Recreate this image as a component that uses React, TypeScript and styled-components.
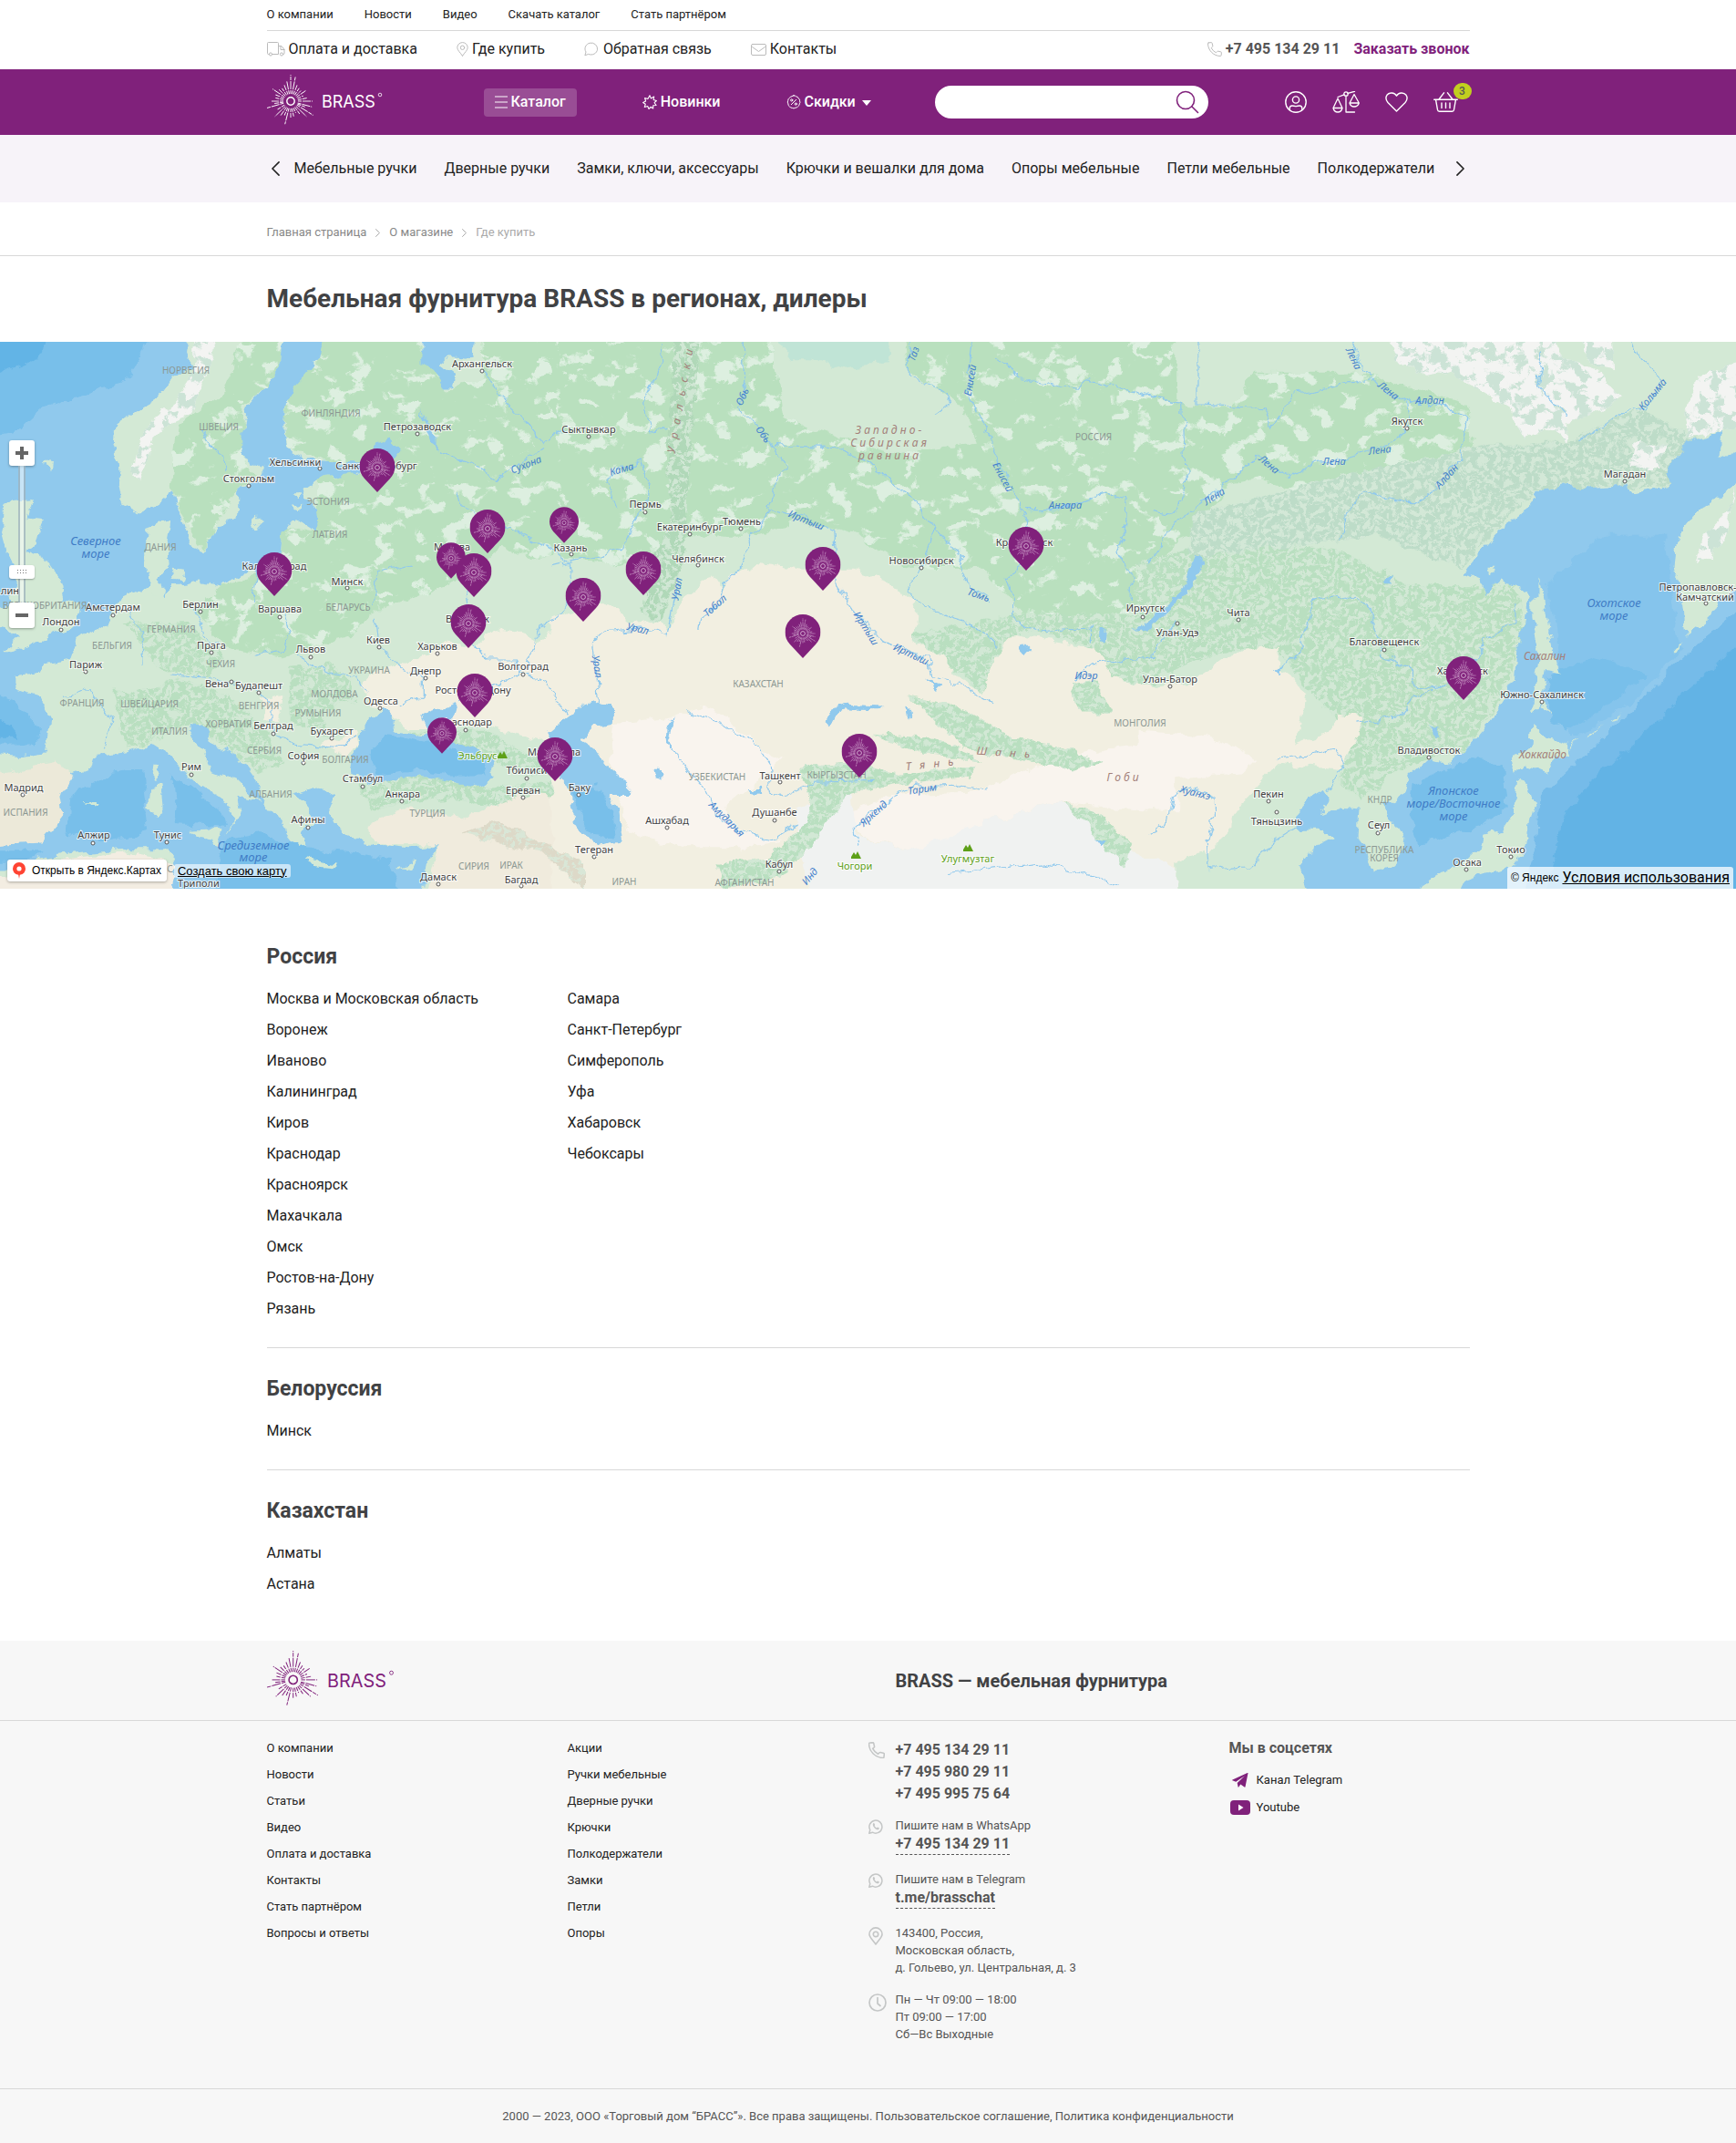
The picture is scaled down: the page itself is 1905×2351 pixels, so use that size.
import React from "react";
import styled, { createGlobalStyle } from "styled-components";

const purple = "#80217b";
const line = "#d8d8d8";

const GlobalStyle = createGlobalStyle`
  *, *::before, *::after { box-sizing: border-box; }
  body { margin: 0; background: #fff; color: #222; font-family: Roboto, "Open Sans", sans-serif; font-size: 16px; line-height: 20px; }
  a { color: inherit; text-decoration: none; }
  button { font: inherit; color: inherit; border: 0; background: none; padding: 0; cursor: pointer; }
  h1, h2, h3, p, ul { margin: 0; padding: 0; }
  ul { list-style: none; }
  svg { display: block; flex: none; }
`;

const Container = styled.div`
  width: 100%;
  max-width: 1320px;
  margin: 0 auto;
`;

/* ---------- header ---------- */

const TopNav = styled.nav`
  display: flex;
  gap: 34px;
  height: 34px;
  padding-top: 6px;
  border-bottom: 1px solid ${line};
  font-size: 13px;
`;

const ServiceRow = styled.div`
  display: flex;
  align-items: center;
  gap: 43px;
  height: 42px;
  padding-bottom: 2px;
`;

const IconLink = styled.a`
  display: flex;
  align-items: center;
  gap: 4px;
  svg { color: #bbb; }
`;

const Callback = styled.div`
  display: flex;
  gap: 15px;
  margin-left: auto;
  font-weight: 700;
  color: #555;
`;

const CallbackButton = styled.button`
  font-weight: 700;
  color: ${purple};
`;

const MainBar = styled.div`
  background: ${purple};
  color: #fff;
`;

const MainBarInner = styled(Container)`
  display: flex;
  align-items: center;
  height: 72px;
`;

const LogoLink = styled.a<{ $wide?: boolean }>`
  flex: 0 0 ${(p) => (p.$wide ? "690px" : "238px")};
`;

const MainNav = styled.nav`
  display: flex;
  align-items: center;
  gap: 72px;
  margin-right: 70px;
  font-weight: 500;
`;

const CatalogButton = styled.button`
  display: flex;
  align-items: center;
  gap: 4px;
  height: 31px;
  padding: 0 12px;
  border-radius: 4px;
  background: #994d95;
  font-weight: 500;
`;

const MainLink = styled.a`
  display: flex;
  align-items: center;
  gap: 4px;
`;

const Caret = styled.svg`
  margin: 2px 0 0 3px;
`;

const Search = styled.form`
  display: flex;
  align-items: center;
  width: 300px;
  height: 36px;
  padding: 0 10px 0 16px;
  border-radius: 18px;
  background: #fff;
  color: ${purple};
`;

const SearchInput = styled.input`
  flex: 1;
  min-width: 0;
  border: 0;
  outline: 0;
  background: none;
  font: inherit;
`;

const UserTools = styled.div`
  display: flex;
  align-items: center;
  gap: 28px;
  margin-left: auto;
`;

const Tool = styled.a`
  position: relative;
  display: block;
`;

const BasketTool = styled(Tool)`
  width: 40px;
`;

const Badge = styled.span`
  position: absolute;
  top: -10px;
  right: -2px;
  width: 20px;
  height: 18px;
  border-radius: 9px;
  background: #c1cf1f;
  color: #555;
  font-size: 12px;
  font-weight: 500;
  line-height: 18px;
  text-align: center;
`;

const CategoryStrip = styled.div`
  background: #f7f3f9;
`;

const CategoryInner = styled(Container)`
  display: flex;
  align-items: center;
  justify-content: space-between;
  height: 74px;
`;

const CategoryNav = styled.nav`
  display: flex;
  flex: 1;
  gap: 30px;
  padding-left: 10px;
  overflow: hidden;
  white-space: nowrap;
`;

const ArrowButton = styled.button`
  display: flex;
  flex: none;
  justify-content: center;
  width: 20px;
`;

/* ---------- page heading ---------- */

const CrumbBar = styled.div`
  border-bottom: 1px solid ${line};
`;

const Crumbs = styled(Container)`
  display: flex;
  align-items: center;
  gap: 10px;
  height: 58px;
  padding-top: 8px;
  font-size: 13px;
  color: #888;
  svg { color: #aaa; }
`;

const CurrentCrumb = styled.span`
  color: #aaa;
`;

const PageTitle = styled.h1`
  height: 94px;
  font-size: 28px;
  line-height: 94px;
  color: #414244;
`;

/* ---------- map ---------- */

const MapFrame = styled.section`
  position: relative;
  height: 600px;
  overflow: hidden;
  background: #d3ead6;
`;

const MapPicture = styled.svg`
  width: 100%;
  height: 600px;
`;

const PinButton = styled.button<{ $x: number; $y: number; $small: boolean }>`
  position: absolute;
  left: calc(50% + ${(p) => p.$x - 952}px);
  top: ${(p) => p.$y}px;
  transform: translate(-50%, -100%);
  z-index: ${(p) => (p.$small ? 1 : 2)};
`;

const ZoomControl = styled.div`
  position: absolute;
  z-index: 3;
  left: 10px;
  top: 108px;
  display: flex;
  flex-direction: column;
  align-items: center;
  width: 28px;
  height: 206px;
`;

const ZoomButton = styled.button`
  display: flex;
  align-items: center;
  justify-content: center;
  width: 28px;
  height: 28px;
  border-radius: 3px;
  background: #fff;
  color: #666;
  box-shadow: 0 1px 3px rgba(0, 0, 0, 0.35);
`;

const ZoomTrack = styled.div`
  flex: 1;
  width: 8px;
  padding-top: 109px;
  border: solid rgba(110, 140, 155, 0.5);
  border-width: 0 2px;
  background: rgba(255, 255, 255, 0.5);
`;

const ZoomHandle = styled.div`
  display: flex;
  align-items: center;
  justify-content: center;
  width: 28px;
  height: 15px;
  margin-left: -12px;
  border-radius: 3px;
  background: #fff;
  box-shadow: 0 1px 2px rgba(0, 0, 0, 0.3);
`;

const MapActions = styled.div`
  position: absolute;
  z-index: 3;
  left: 8px;
  bottom: 8px;
  display: flex;
  align-items: center;
  gap: 8px;
  font-family: "Liberation Sans", Arial, sans-serif;
  font-size: 12px;
  color: #000;
`;

const OpenMap = styled.a`
  display: flex;
  align-items: center;
  gap: 7px;
  height: 24px;
  padding: 0 6px;
  border-radius: 3px;
  background: #fff;
  box-shadow: 0 1px 3px rgba(0, 0, 0, 0.3);
`;

const CreateMap = styled.a`
  padding: 0 4px;
  border-radius: 3px;
  background: rgba(255, 255, 255, 0.6);
  font-size: 13px;
  line-height: 15px;
  text-decoration: underline;
`;

const MapCopyright = styled.div`
  position: absolute;
  z-index: 3;
  right: 3px;
  bottom: 0;
  display: flex;
  align-items: center;
  gap: 4px;
  height: 24px;
  padding: 0 4px;
  border-radius: 3px 3px 0 0;
  background: rgba(255, 255, 255, 0.75);
  color: #000;
  font-family: "Liberation Sans", Arial, sans-serif;
  font-size: 12px;
`;

const TermsLink = styled.a`
  font-family: Roboto, sans-serif;
  font-size: 16px;
  text-decoration: underline;
`;

/* ---------- dealers ---------- */

const Dealers = styled(Container)`
  padding: 30px 0 20px;
`;

const Country = styled.section`
  padding: 31px 0 25px;
  border-bottom: 1px solid ${line};
  &:last-child { border-bottom: 0; }
`;

const CountryName = styled.h2`
  margin-bottom: 15px;
  font-size: 23px;
  line-height: 28px;
  color: #414244;
`;

const CityList = styled.ul<{ $rows: number }>`
  display: grid;
  grid-auto-flow: column;
  grid-template-rows: repeat(${(p) => p.$rows}, 34px);
  grid-template-columns: repeat(4, 1fr);
  line-height: 34px;
`;

/* ---------- footer ---------- */

const FooterRoot = styled.footer`
  background: #f7f7f7;
`;

const FooterBand = styled.div`
  border-bottom: 1px solid ${line};
`;

const FooterHead = styled(Container)`
  display: flex;
  align-items: center;
  height: 87px;
`;

const FooterTitle = styled.h3`
  font-size: 20px;
  line-height: 24px;
  color: #414244;
`;

const FooterGrid = styled(Container)`
  display: grid;
  grid-template-columns: 25fr 25fr 30fr 20fr;
  align-items: start;
  padding: 15px 0 47px;
`;

const FooterLinks = styled.ul`
  font-size: 13px;
  line-height: 29px;
`;

const Contacts = styled.div`
  display: flex;
  flex-direction: column;
  gap: 13px;
  padding-top: 5px;
  font-size: 13px;
  line-height: 19px;
  color: #555;
`;

const ContactRow = styled.div`
  display: grid;
  grid-template-columns: 30px 1fr;
  align-items: start;
  svg { margin-top: 3px; color: #c4c6c6; }
  p { padding-bottom: 3px; }
`;

const Phones = styled.div`
  display: grid;
  font-size: 16px;
  font-weight: 700;
  line-height: 24px;
`;

const ChatLink = styled.a`
  display: table;
  border-bottom: 1px dashed #555;
  font-size: 16px;
  font-weight: 700;
  line-height: 22px;
`;

const ChatBlock = styled.div`
  padding-bottom: 4px;
`;

const Social = styled.div`
  display: flex;
  flex-direction: column;
  gap: 10px;
  padding-top: 5px;
  font-size: 13px;
`;

const SocialTitle = styled.h3`
  margin-bottom: 5px;
  font-size: 16px;
  line-height: 20px;
  color: #555;
`;

const SocialLink = styled.a`
  display: grid;
  grid-template-columns: 24px 1fr;
  align-items: center;
  justify-items: start;
  gap: 6px;
  height: 20px;
  svg { justify-self: center; color: ${purple}; }
`;

const Copyright = styled.p`
  padding: 20px 0 19px;
  font-size: 13px;
  text-align: center;
  color: #555;
`;

/* ---------- drawings ---------- */

const rays: [number, number][] = [
  [0, 29], [11, 27], [22, 19], [33, 17], [44, 16], [55, 20], [67, 15], [79, 18], [90, 24], [105, 24],
  [112, 17], [122, 29], [134, 24], [145, 17], [157, 14], [169, 17], [180, 18], [194, 26], [204, 17],
  [215, 19], [226, 24], [238, 17], [254, 27], [262, 18], [270, 21], [282, 17], [293, 18], [304, 24],
  [315, 18], [326, 17], [338, 19], [349, 23],
];

const Burst = ({ cx, cy, k, width }: { cx: number; cy: number; k: number; width: number }) => (
  <g transform={`translate(${cx} ${cy}) scale(${k})`} stroke="currentColor" strokeWidth={width} fill="none">
    {rays.map(([a, r]) => (
      <line key={a} x1="0" y1="-8" x2="0" y2={-r} transform={`rotate(${a})`} strokeDasharray="4 1 9 1" />
    ))}
    <circle r="4.2" strokeWidth={width * 1.6} />
  </g>
);

const Logo = ({ large }: { large?: boolean }) => (
  <svg width={large ? 141 : 128} height={large ? 66 : 60} viewBox="0 0 128 60" color={large ? purple : "#fff"}>
    <Burst cx={26} cy={29} k={1} width={0.9} />
    <text x="60" y="36" fill="currentColor" fontFamily="Inter, sans-serif" fontSize="18" fontWeight="400">BRASS</text>
    <circle cx="124" cy="22" r="1.8" fill="none" stroke="currentColor" strokeWidth="0.8" />
  </svg>
);

const stroke = { fill: "none", stroke: "currentColor", strokeLinecap: "round", strokeLinejoin: "round" } as const;

const TruckIcon = () => (
  <svg width="20" height="16" viewBox="0 0 20 16" {...stroke} strokeWidth="1">
    <path d="M2.5 13.5H1.5a1 1 0 0 1-1-1V1.5a1 1 0 0 1 1-1h10a1 1 0 0 1 1 1v12h-7M12.5 4.5h3.5l3 4v4a1 1 0 0 1-1 1M15 4.5v4h4" />
    <circle cx="4" cy="13.5" r="1.6" /><circle cx="16" cy="13.5" r="1.6" />
  </svg>
);
const PlaceIcon = ({ size = 16, weight = 1 }: { size?: number; weight?: number }) => (
  <svg width={Math.round((size * 13) / 16)} height={size} viewBox="0 0 13 16" {...stroke} strokeWidth={weight}>
    <path d="M6.5 15.3C4 11.500.8 9 .8 6.300a5.700 5.700 0 0 1 11.400 0C12.200 9 9 11.500 6.500 15.300Z" /><circle cx="6.500" cy="6.300" r="2.200" />
  </svg>
);
const CommentIcon = () => (
  <svg width="17" height="16" viewBox="0 0 17 16" {...stroke} strokeWidth="1">
    <path d="M1 14.500 2 11A6.800 6.500 0 1 1 5 13.500Z" />
  </svg>
);
const MailIcon = () => (
  <svg width="17" height="13" viewBox="0 0 17 13" {...stroke} strokeWidth="1">
    <rect x=".5" y=".5" width="16" height="12" rx="1.500" /><path d="m1.500 3.500 7 5 7-5" />
  </svg>
);
const PhoneIcon = ({ size = 16, weight = 1 }: { size?: number; weight?: number }) => (
  <svg width={size} height={size} viewBox="0 0 16 16" {...stroke} strokeWidth={weight}>
    <path d="M1.200.900 4.200.600c.5 0 .8.300.900.700l.7 3c.1.400 0 .7-.3 1L4.200 6.600a12 12 0 0 0 5.200 5.200l1.300-1.300c.3-.3.600-.4 1-.3l3 .7c.4.100.7.400.7.900l-.3 3c0 .4-.4.700-.8.700C6.500 15.500.500 9 .500 1.700c0-.4.300-.8.700-.8Z" />
  </svg>
);
const MenuIcon = () => (
  <svg width="14" height="16" viewBox="0 0 14 16" stroke="#fff" strokeOpacity=".65" strokeWidth="1.500"><path d="M0 2h14M0 8h14M0 14h14" /></svg>
);
const SparkIcon = () => (
  <svg width="16" height="16" viewBox="0 0 16 16" {...stroke} strokeWidth="1.100">
    <path d="m8 .7 1.300 3.200L12.700 2l-.6 3.500 3.300 1-2.300 2.200 2 2.800-3.400.2v3.300l-2.600-1.700L7 15.500l-1.300-3-3.400 1 1-3.300L.6 8.500l3-1.500-1-3.500 3.300 1Z" />
  </svg>
);
const PercentIcon = () => (
  <svg width="16" height="16" viewBox="0 0 16 16" {...stroke} strokeWidth="1">
    <path d="M8 .8q2 .1 2.600 1 2.200.2 2.700 2.200 1.700 1 1.300 2.800.9 1.700-.3 3 .1 2-1.600 2.900-1 1.700-2.800 1.500Q8 15.500 6.300 14.400q-2 .1-3-1.700-1.700-1-1.400-2.800Q.7 8 1.700 6.500q-.1-2 1.600-3Q4.300 1.700 6 1.800 6.800.8 8 .8ZM5.300 10.700l5.400-5.400" />
    <circle cx="5.700" cy="5.900" r="1.100" /><circle cx="10.300" cy="10.100" r="1.100" />
  </svg>
);
const CaretIcon = () => (
  <Caret width="10" height="6" viewBox="0 0 10 6"><path d="M0 0h10L5 6Z" fill="currentColor" /></Caret>
);
const SearchIcon = () => (
  <svg width="26" height="26" viewBox="0 0 26 26" {...stroke} strokeWidth="1.600"><circle cx="11" cy="11" r="9.500" /><path d="m18 18 6.500 6.500" /></svg>
);
const UserIcon = () => (
  <svg width="24" height="24" viewBox="0 0 24 24" {...stroke} strokeWidth="1.400">
    <circle cx="12" cy="12" r="11.200" /><circle cx="12" cy="9.500" r="3.600" />
    <path d="M5.200 20.500v-1.700q0-2.800 2.800-2.800 1.500 0 4 .7 2.500-.7 4-.7 2.800 0 2.800 2.800v1.700" />
  </svg>
);
const ScalesIcon = () => (
  <svg width="30" height="24" viewBox="0 0 30 24" {...stroke} strokeWidth="1.300">
    <circle cx="15" cy="3" r="2.200" /><path d="M15 5.200V23h9.500M13 3.800 6 6.500M17 2.300l7.500-2M6 8 1 18.500h10ZM24 3.500l-5 9.500h10.300ZM1 18.500q1 4.500 5 4.500t5-4.500M19 13q1 4 5 4t5.300-4" />
  </svg>
);
const HeartIcon = () => (
  <svg width="25" height="22" viewBox="0 0 25 22" {...stroke} strokeWidth="1.400">
    <path d="M12.500 21 3 11.500Q-.6 7 2 3.300 4 .8 7.300 1q3.500.2 5.200 3.200Q14.200 1.200 17.700 1 21 .8 23 3.300q2.600 3.700-1 8.200Z" />
  </svg>
);
const BasketIcon = () => (
  <svg width="27" height="22" viewBox="0 0 27 22" {...stroke} strokeWidth="1.400">
    <path d="M.7 8.200h25.600M2.500 8.200l2 11.300q.3 1.700 2 1.700h14q1.700 0 2-1.700l2-11.300M6 8 11.500.8M21 8 15.500.8M9 12v5.500M13.500 12v5.500M18 12v5.500" />
  </svg>
);
const Chevron = ({ w, h, left, weight = 1 }: { w: number; h: number; left?: boolean; weight?: number }) => (
  <svg width={w} height={h} viewBox="0 0 10 18" {...stroke} strokeWidth={weight}><path d={left ? "M9 1 1 9l8 8" : "m1 1 8 8-8 8"} /></svg>
);
const WhatsAppIcon = () => (
  <svg width="16" height="16" viewBox="0 0 16 16" {...stroke} strokeWidth="1.500">
    <path d="m.8 15.200 1-3.700a7 7 0 1 1 2.700 2.700Z" />
    <path d="M5.200 4.300q-1 1.200 0 3.200 1.500 2.800 4 3.700 1.800.5 2.400-.8.400-1-.4-1.300l-1.300-.6-.9.900q-1.700-.8-2.400-2.300l.6-.8-.6-1.800q-.7-1-1.400-.2Z" fill="currentColor" stroke="none" />
  </svg>
);
const ClockIcon = () => (
  <svg width="20" height="20" viewBox="0 0 20 20" {...stroke} strokeWidth="1.700"><circle cx="10" cy="10" r="9" /><path d="M10 4.500V11l3 2.500" /></svg>
);
const TelegramIcon = () => (
  <svg width="18" height="16" viewBox="0 0 18 16" fill="currentColor">
    <path d="M17.500.3 14.500 15.300Q14.300 16 13.600 15.600L9.300 12.600 7.300 15.500 6.700 15.700 5.700 11 13.800 3.200 4.200 9.700.5 8.300Q-.3 8 .5 7.500L16.800.1Q17.700-.2 17.500.3Z" />
  </svg>
);
const YoutubeIcon = () => (
  <svg width="22" height="16" viewBox="0 0 22 16"><rect width="22" height="16" rx="4" fill="currentColor" /><path d="m9 4.500 5.500 3.500L9 11.500Z" fill="#fff" /></svg>
);

const PinShape = ({ small }: { small: boolean }) => (
  <svg width={small ? 32 : 39} height={small ? 40 : 48} viewBox="0 0 39 48" color="#e2c4e0">
    <path d="M19.500 48 5.500 33Q0 27 0 19.500a19.500 19.500 0 0 1 39 0Q39 27 33.500 33Z" fill={purple} />
    <Burst cx={19.5} cy={21} k={0.58} width={0.9} />
  </svg>
);

/* ---------- map data: three side-by-side sheets, each on its own grid ---------- */

type Sheet = 0 | 1 | 2;
const sheetX = [0, 630, 1265];
const kx = 1 / 2.45;
const ky = 1 / 2.57;
const px = (s: Sheet, x: number) => Math.round(sheetX[s] + x * kx);
const py = (y: number) => Math.round((y - 13) * ky);

const water = "#90c9ed";
const deep = "#78bfea";
const light = "#d3e9d5";
const forest = "#b9e0be";
const steppe = "#f2efe1";
const desert = "#f9f4ee";
const snow = "#f3f4f2";
const hill = "#b9dfc0";

type Area = [Sheet, string, string, boolean?];

const vegetation: Area[] = [
  [0, forest, "M870-60H1130L1200 150 1300 110 1290-60H1600V590L1420 630 1350 590 1200 700 1100 740 1000 780 950 840 850 870 760 900 700 890 600 870 550 800 520 770 600 700 700 660 750 620 760 530 850 550 850 400 980 380 770 310 760 200Z", true],
  [0, forest, "M480 250 600 150 680-60H770L760 80 720 130 655 200 650 330 690 390 640 430 580 540 545 600 500 530 460 420 470 330Z", true],
  [0, hill, "M300 1000 420 990 480 960 620 1010 700 1090 760 1200 700 1230 600 1150 510 1090 400 1140 340 1160Z", true],
  [0, hill, "M340 800 500 800 600 900 560 960 420 930ZM780 930 900 920 960 1020 860 1060 880 1130 780 1080Z", true],
  [0, hill, "M960 1260 1130 1235 1350 1270 1500 1250 1568 1330 1400 1330 1200 1300 1000 1330ZM1100 1110 1300 1110 1480 1200 1440 1240 1330 1200Z", true],
  [1, forest, "M-40-60H520L560 230 740 290 850 330 1080 300 1050 200 900 100 880-60H1620V520L1568 720 1450 800 1200 780 1100 650 900 650 760 560 600 520 480 560 330 560 200 620 100 640-40 620Z", true],
  [1, "#c0e4d6", "M520-40H840L850 70 720 90 640 60 580 60Z"],
  [1, "#b0d8b8", "M270-40H340L300 560 290 640 230 800 180 780 200 640 260 540 250 300Z", true],
  [1, hill, "M900 840 1200 780 1568 780V980L1440 960 1400 880 1200 820 1180 1050 1100 1000Z", true],
  [2, forest, "M280 100 560 100 850 190 860 300 880 520 800 510 700 440 560 420 540 500 300 400 200 420 100 560-40 600V170L90 190 200 200Z", true],
  [2, hill, "M-40 640 200 560 500 600 700 700 980 700 1000 800 960 970 840 1165 700 1200 560 1300 500 1250 540 1120 420 1000 340 880 200 880-40 980Z", true],
  [2, "#bddcc8", "M100 500 560 380 900 300 1100 300 1300 200 1500 300 1400 420 1030 430 830 650 600 560 100 620Z", true],
];

const dry: Area[] = [
  [0, steppe, "M1000 950 1100 920 1200 860 1280 870 1330 820 1420 840 1450 860 1500 800 1600 790V1060L1480 1110 1500 1150 1320 1100 1100 1100 1000 1040 970 980Z"],
  [0, "#f0ebdd", "M990 1370 1100 1330 1250 1350 1400 1290 1620 1300V1620H1130L1180 1430 1020 1430Z"],
  [0, "#ece9d9", "M-40 1240 150 1200 200 1230 160 1290 170 1350 110 1425-40 1440Z"],
  [0, "#f3ede2", "M150 1475 340 1450 470 1480 460 1620H-40V1540Z"],
  [0, steppe, "M700 1020 755 1010 750 1080 710 1085ZM860 1150 960 1110 970 1160 930 1180Z"],
  [1, steppe, "M-60 790 60 750 120 770 160 810 230 800 250 830 290 740 350 690 380 680 400 710 420 670 490 640 620 655 750 655 820 680 880 720 925 740 910 860 1000 900 1030 960 1100 1000 1130 900 1180 840 1400 880 1450 960 1620 1000V1620H-60Z"],
  [2, steppe, "M-60 1000 100 970 200 900 290 870 345 880 340 930 380 960 410 1010 400 1090 380 1150 480 1110 500 1060 560 1070 550 1120 500 1220 340 1200 250 1300 200 1400 150 1450 60 1480-60 1490Z"],
  [1, desert, "M110 1090 250 1075 350 1040 420 1080 500 1160 560 1190 480 1260 400 1330 460 1400 560 1420 450 1440 300 1440 150 1400 130 1330 100 1200Z"],
  [1, desert, "M730 1340 850 1290 1100 1280 1300 1180 1620 1130V1340L1300 1310 1100 1370 1050 1400 900 1450 770 1400Z"],
  [2, desert, "M-40 1110 120 1120 220 1150 280 1190 240 1230 100 1240-40 1260Z"],
  [1, "#f0f2f1", "M600 1330 740 1250 760 1400 900 1450 1100 1370 1300 1310 1400 1340 1480 1440 1620 1500V1620H640L600 1400Z"],
];

const ridges: Area[] = [
  [1, hill, "M900 1010 1030 1040 1180 1130 1300 1150 1420 1200 1350 1220 1200 1190 1050 1160ZM800 1120 960 1130 1100 1190 960 1180Z", true],
  [1, hill, "M600 1210 740 1200 880 1230 1080 1210 1060 1240 860 1260 740 1290 660 1400 560 1520 400 1555 380 1490 520 1470 620 1370 640 1300Z", true],
  [1, hill, "M1310 1310 1400 1340 1500 1430 1480 1500 1400 1400ZM1330 980 1400 960 1450 1060 1360 1060Z", true],
  [0, "#ddd9c8", "M1240 1400 1340 1360 1568 1480V1555L1460 1450 1300 1420Z", true],
  [0, snow, "M520-60H590L570 60 540 150 510 220 450 240 410 290 400 340 375 410 360 380 370 300 400 240 470 180 520 100Z", true],
  [2, snow, "M610-60H1060L1100 60 1200 100 1260 170 1180 220 1120 240 1110 300 1060 250 1000 290 960 200 880 150 800 100 740 110 650 60Z", true],
  [2, snow, "M1130-60H1230L1240 90 1180 80ZM1620 70 1480 100 1430 200 1440 280 1530 265 1620 240ZM1300 300 1380 310 1360 370 1290 370Z", true],
];

const seas: Area[] = [
  [0, water, "M-80-60H520L500 40 520 90 470 110 430 170 380 200 310 245 305 300 315 350 320 420 330 470 375 495 430 465 465 435 490 520 510 590 545 605 580 540 640 500 640 430 700 410 705 370 650 330 650 270 670 190 720 130 760 80 770-60H880L860 60 800 130 770 180 760 250 770 310 830 345 900 350 985 350 960 385 850 400 810 430 830 460 850 480 855 550 810 520 770 530 755 570 750 620 700 660 640 665 600 700 540 690 470 700 440 730 410 700 360 725 310 750 290 800 250 830 210 850 190 910 120 920 110 945 40 955 40 990 100 1010 135 1080 125 1170 60 1180-80 1170Z"],
  [0, water, "M20 1430 110 1425 170 1350 160 1290 200 1230 250 1210 255 1180 340 1170 410 1140 440 1160 470 1200 540 1270 600 1310 635 1360 610 1400 650 1350 635 1290 700 1310 640 1250 570 1220 540 1160 510 1110 515 1090 550 1100 560 1140 640 1180 690 1250 710 1310 760 1370 800 1430 830 1440 800 1370 860 1370 810 1310 790 1290 850 1270 900 1290 880 1340 920 1400 990 1430 1060 1435 1110 1440 1180 1430 1150 1480 1130 1620H500L460 1540 470 1500 460 1440 350 1440 250 1450 130 1465 20 1500-80 1500V1440Z"],
  [0, water, "M1140-60H1280L1270 60 1210 55 1185 75 1225 105 1220 140 1190 140 1160 90 1130 60ZM1000 300 1050 285 1080 320 1060 350 1010 340ZM1130 205 1150 240 1175 280 1175 320 1160 300Z"],
  [0, water, "M970 1110 1030 1050 1060 1080 1060 1110 1150 1120 1260 1150 1320 1190 1330 1240 1290 1270 1200 1250 1130 1235 1050 1250 1000 1260 950 1240 940 1200 970 1160Z"],
  [0, water, "M1150 1060 1230 1030 1220 1070 1150 1100 1135 1070Z"],
  [1, water, "M-70 1110 0 1050 60 1025 105 1035 105 1090 50 1100 20 1130 50 1150 90 1210 140 1250 140 1290 95 1290 120 1330 130 1420 70 1430 20 1400 0 1370-10 1290-40 1230-70 1150Z"],
  [1, water, "M670 1085 690 1050 730 1035 830 1040 820 1052 730 1050 700 1070 685 1100ZM262 1072 252 1120 268 1160 245 1135 246 1100ZM940 965 985 985 975 997ZM1195 875 1210 862 1225 878 1210 895ZM890 1048 908 1052 910 1075 895 1072ZM1420 825 1430 825 1428 865 1418 865ZM212 1220 228 1220 235 1245 215 1240ZM460 1270 505 1270 505 1285 470 1280ZM1405 1412 1430 1420 1420 1435Z"],
  [2, water, "M125 612 133 640 110 700 40 775 0 820-50 830-20 805 40 755 80 715 105 650ZM620 680 650 672 640 695 625 695ZM748 1098 768 1098 765 1125 752 1125ZM330 945 350 925 345 945Z"],
  [2, water, "M1620 300 1530 345 1535 265 1500 275 1440 290 1405 340 1375 380 1395 420 1290 440 1280 410 1200 420 1140 425 1100 415 1030 435 990 500 930 550 870 620 835 665 880 680 890 725 930 690 990 705 1010 740 1000 800 985 840 975 960 900 1090 840 1165 790 1200 740 1190 690 1240 680 1290 625 1320 640 1360 675 1410 670 1460 640 1490 590 1510 570 1440 555 1400 560 1330 500 1325 450 1345 475 1300 460 1275 420 1300 380 1350 385 1390 440 1390 485 1410 430 1440 395 1490 430 1620H1620Z"],
];

const depths: Area[] = [
  [0, deep, "M-80-60H430L380 60 330 130 230 160 120 200 60 260-80 290ZM-80 980 40 1030 110 1100 100 1150-80 1150Z"],
  [0, "#62b4e6", "M-80-60H170L100 60-80 140ZM-80 1040 30 1090 50 1130-80 1130Z"],
  [0, deep, "M190 1290 300 1230 380 1220 400 1400 300 1420 180 1400ZM460 1230 600 1340 610 1380 480 1370ZM600 1420 700 1400 760 1420 900 1450 1050 1470 1090 1620H560ZM-80 1450H120L60 1480H-80Z"],
  [0, deep, "M985 1180 1040 1120 1130 1140 1240 1165 1300 1200 1310 1235 1200 1235 1120 1220 1020 1235Z"],
  [1, deep, "M-10 1280 60 1260 100 1330 110 1410 40 1400Z"],
  [2, "#85c4ec", "M1060 700 1200 560 1380 560 1400 780 1420 880 1300 1020 1130 1130 1110 1000Z"],
  [2, deep, "M1060 960 1200 900 1330 950 1180 1070 1120 1110 1070 1080ZM700 1260 850 1190 940 1200 950 1330 860 1390 720 1430 690 1340Z"],
  [2, "#74bbe9", "M1620 730 1480 850 1370 960 1280 1060 1140 1200 1040 1300 1030 1440 980 1620H1620Z"],
  [2, "#62b3e5", "M1620 820 1530 910 1430 1000 1330 1110 1180 1250 1100 1350 1080 1460 1040 1620H1620Z"],
];

const islands: Area[] = [
  [0, light, "M40 465 85 460 75 510 115 515 100 580 70 600 130 640 170 700 175 740 215 750 205 800 170 830 100 860 30 885 10 885 50 850 20 820-60 810V770L20 760 50 700 20 600 5 540 10 480Z"],
  [0, light, "M395 540 460 515 450 570 455 640 430 680 440 740 410 730 395 640ZM465 650 495 655 490 685 470 680ZM690 500 700 520 680 545 672 535ZM780 475 815 470 800 490ZM780 440 810 440 800 455ZM120 345 135 350 130 385Z"],
  [0, light, "M405 1270 435 1265 440 1330 415 1350 400 1330ZM415 1205 430 1205 425 1255 410 1245ZM510 1390 600 1385 585 1430 530 1405ZM820 1470 900 1485 890 1494 830 1487ZM1070 1490 1120 1475 1110 1500ZM230 1320 260 1315 250 1330ZM760 1340 830 1350 800 1440 770 1400Z"],
  [2, light, "M1620 380 1520 450 1440 510 1410 590 1405 660 1425 740 1435 845 1490 800 1520 740 1620 690Z"],
  [2, light, "M1040 685 1050 720 1060 800 1075 900 1100 950 1055 940 1045 1010 1068 1060 1040 1040 1022 1065 1025 1000 1040 900 1020 790 1020 740 1040 730ZM1020 1090 1060 1130 1120 1150 1125 1180 1080 1190 1060 1230 1000 1205 975 1235 965 1200 990 1170 1015 1150ZM900 650 920 650 905 670Z"],
  [2, light, "M980 1250 1010 1260 1025 1330 1010 1400 1000 1450 960 1490 900 1510 840 1530 800 1620H670L740 1520 830 1490 880 1440 885 1405 940 1390 970 1340Z"],
  [2, light, "M1395 890 1425 855 1405 890ZM1232 1082 1262 1058 1245 1080ZM1165 1125 1215 1090 1180 1120ZM1122 1155 1145 1132 1135 1148Z"],
  [2, snow, "M1568 420 1540 500 1480 560 1460 640 1500 620 1540 560Z", true],
];

const rivers: [Sheet, string][] = [
  [0, "M1400 940 1440 880 1450 820 1500 790 1535 720 1530 640 1480 600 1370 540 1240 480 1230 440M1400 940 1470 980 1520 1060M1250 680 1270 860 1310 910 1390 910 1400 950 1350 970 1240 1030M1010 790 1020 870 1080 940 1140 960 1140 1010 1080 1040M460 950 560 960 700 1000 730 1040 730 1110 800 1150 900 1160 960 1130"],
  [0, "M1300 90 1340 160 1420 240 1460 300 1520 260M1180 320 1260 350 1340 400 1460 310M540 260 590 340 610 370M680 750 690 660M760 760 780 830 760 880 690 900M520 760 560 850 600 880M180 1020 240 990 300 1080 280 1160M390 920 380 820 340 760M800 900 900 950 960 960 990 1000M1000 760 1010 660 1110 640"],
  [1, "M455-20 460 130 440 190 500 260 540 315 570 370 540 420 525 490 480 560 440 660 400 700 390 750 340 790 335 825M540 305 700 310 780 340 850 410 920 460 970 540 930 660 890 710 960 770 1060 800 1130 870M525 490 620 510 700 550 705 620 700 690 770 790 830 860 950 900 960 960 1040 980 1120 1025"],
  [1, "M1075-20 1055 150 1120 290 1180 440 1220 510 1210 640 1160 680 1180 740 1180 790 1250 830 1390 820 1390 860M1220 485 1300 485 1440 440 1485 450 1480 560 1460 600 1500 680 1500 740M65 1025 50 860 80 830 180 820 250 840 265 750 280 690M970 540 1040 620 1060 700 1120 740M900 13 900 110 1000 160 1010 190 970 220M1130 60 1200 110 1350 150 1380 120 1568 170"],
  [1, "M300 1050 350 1070 420 1100 500 1160 525 1200 530 1280 560 1295 650 1255 800 1250M250 1130 280 1190 350 1270 380 1340 460 1400 530 1415 600 1370M1110 1280 1020 1260 920 1265 850 1300 790 1350 750 1390 760 1430M120 480 90 400 120 370 180 350 200 400 190 460 130 600-60 650M230 13 235 80 185 180 200 270 250 260M1568 900 1400 920 1340 970M1000 1510 1260 1480 1460 1540"],
  [2, "M530-20 560 80 620 150 680 180 690 250 640 300 520 340 440 355 370 395 280 335 200 410 110 480 40 550-10 640M680 180 780 190 850 230 830 340 760 430 700 465 620 450 570 430 520 500 505 570M345 935 400 870 430 740 520 725 580 760 610 850 620 900 690 930 715 990 780 980 880 890 890 860 970 800 970 750M540 1090 660 1070 700 1020 780 980"],
  [2, "M-10 1400 40 1370 50 1290 100 1270 170 1300 170 1350 145 1420 150 1500 260 1490 330 1420 390 1380M1280-20 1310 60 1370 120 1320 210 1280 200 1200 260 1150 290M1050 40 1030 130 1110 220M340 1190 420 1180 490 1160 515 1200 470 1280M0 170 80 190 90 420 60 500 0 490M120 13 120 190 300 200 320 260 380 160 590 120M0 900 60 800"],
];

type Kind = "city" | "country" | "sea" | "river" | "range" | "peak";
type Label = [Sheet, number, number, string, Kind, number?];

const spread = (word: string) => word.split("").join("\u2002\u00a0");

const labels: Label[] = [
  [0, 1295, 71, "Архангельск", "city"], [0, 1123, 249, "Петрозаводск", "city"], [0, 794, 349, "Хельсинки", "city"],
  [0, 1011, 360, "Санкт-Петербург", "city"], [0, 670, 397, "Стокгольм", "city"], [0, 738, 643, "Калининград", "city"],
  [0, 934, 686, "Минск", "city"], [0, 752, 764, "Варшава", "city"], [0, 540, 750, "Берлин", "city"], [0, 303, 758, "Амстердам", "city"],
  [0, 163, 799, "Лондон", "city"], [0, 568, 865, "Прага", "city"], [0, 231, 920, "Париж", "city"], [0, 836, 877, "Львов", "city"],
  [0, 1017, 850, "Киев", "city"], [0, 1177, 868, "Харьков", "city"], [0, 1143, 937, "Днепр", "city"], [0, 1406, 926, "Волгоград", "city"],
  [0, 584, 975, "Вена", "city"], [0, 696, 979, "Будапешт", "city"], [0, 1023, 1022, "Одесса", "city"], [0, 1272, 991, "Ростов-на-Дону", "city"],
  [0, 1252, 1083, "Краснодар", "city"], [0, 736, 1092, "Белград", "city"], [0, 893, 1108, "Бухарест", "city"], [0, 817, 1177, "София", "city"],
  [0, 514, 1208, "Рим", "city"], [0, 974, 1241, "Стамбул", "city"], [0, 1415, 1219, "Тбилиси", "city"], [0, 1490, 1168, "Махачкала", "city"],
  [0, 1406, 1275, "Ереван", "city"], [0, 1083, 1285, "Анкара", "city"], [0, 63, 1266, "Мадрид", "city"], [0, 829, 1358, "Афины", "city"],
  [0, 252, 1402, "Алжир", "city"], [0, 451, 1401, "Тунис", "city"], [0, 1178, 1518, "Дамаск", "city"], [0, 1402, 1526, "Багдад", "city"],
  [0, 534, 1536, "Триполи", "city"], [0, 1215, 589, "Москва", "city"], [0, 1258, 792, "Воронеж", "city"], [0, 26, 712, "лин", "city"],
  [0, 1533, 590, "Казань", "city"],
  [1, 38, 257, "Сыктывкар", "city"], [1, 190, 469, "Пермь", "city"], [1, 311, 532, "Екатеринбург", "city"], [1, 450, 518, "Тюмень", "city"],
  [1, 333, 622, "Челябинск", "city"], [1, 933, 627, "Новосибирск", "city"], [1, 1211, 576, "Красноярск", "city"], [1, 1537, 762, "Иркутск", "city"],
  [1, 553, 1233, "Ташкент", "city"], [1, 540, 1336, "Душанбе", "city"], [1, 251, 1360, "Ашхабад", "city"], [1, 15, 1268, "Баку", "city"],
  [1, 55, 1441, "Тегеран", "city"], [1, 551, 1483, "Кабул", "city"],
  [2, 684, 233, "Якутск", "city"], [2, 1270, 384, "Магадан", "city"], [2, 231, 775, "Чита", "city"], [2, 67, 830, "Улан-Удэ", "city"],
  [2, 47, 961, "Улан-Батор", "city"], [2, 622, 857, "Благовещенск", "city"], [2, 832, 937, "Хабаровск", "city"], [2, 1045, 1004, "Южно-Сахалинск", "city"],
  [2, 742, 1162, "Владивосток", "city"], [2, 312, 1286, "Пекин", "city"], [2, 334, 1362, "Тяньцзинь", "city"], [2, 607, 1373, "Сеул", "city"],
  [2, 963, 1442, "Токио", "city"], [2, 845, 1477, "Осака", "city"], [2, 1464, 701, "Петропавловск-", "city"], [2, 1484, 729, "Камчатский", "city"],
  [0, 500, 93, "НОРВЕГИЯ", "country"], [0, 587, 252, "ШВЕЦИЯ", "country"], [0, 889, 213, "ФИНЛЯНДИЯ", "country"], [0, 882, 463, "ЭСТОНИЯ", "country"],
  [0, 888, 554, "ЛАТВИЯ", "country"], [0, 430, 592, "ДАНИЯ", "country"], [0, 937, 760, "БЕЛАРУСЬ", "country"], [0, 120, 756, "ВЕЛИКОБРИТАНИЯ", "country"],
  [0, 460, 823, "ГЕРМАНИЯ", "country"], [0, 302, 870, "БЕЛЬГИЯ", "country"], [0, 592, 920, "ЧЕХИЯ", "country"], [0, 993, 938, "УКРАИНА", "country"],
  [0, 220, 1032, "ФРАНЦИЯ", "country"], [0, 402, 1033, "ШВЕЙЦАРИЯ", "country"], [0, 697, 1038, "ВЕНГРИЯ", "country"], [0, 900, 1005, "МОЛДОВА", "country"],
  [0, 856, 1059, "РУМЫНИЯ", "country"], [0, 616, 1091, "ХОРВАТИЯ", "country"], [0, 455, 1111, "ИТАЛИЯ", "country"], [0, 710, 1165, "СЕРБИЯ", "country"],
  [0, 928, 1190, "БОЛГАРИЯ", "country"], [0, 728, 1288, "АЛБАНИЯ", "country"], [0, 68, 1339, "ИСПАНИЯ", "country"], [0, 1150, 1341, "ТУРЦИЯ", "country"],
  [0, 1275, 1491, "СИРИЯ", "country"], [0, 1374, 1487, "ИРАК", "country"], [0, 425, 1499, "ТУНИС", "country"],
  [1, 1397, 279, "РОССИЯ", "country"], [1, 495, 976, "КАЗАХСТАН", "country"], [1, 384, 1239, "УЗБЕКИСТАН", "country"], [1, 705, 1234, "КЫРГЫЗСТАН", "country"],
  [1, 1522, 1087, "МОНГОЛИЯ", "country"], [1, 134, 1535, "ИРАН", "country"], [1, 458, 1538, "АФГАНИСТАН", "country"],
  [2, 611, 1304, "КНДР", "country"], [2, 622, 1444, "РЕСПУБЛИКА", "country"], [2, 623, 1468, "КОРЕЯ", "country"],
  [0, 257, 573, "Северное", "sea"], [0, 257, 608, "море", "sea"], [0, 681, 1431, "Средиземное", "sea"], [0, 681, 1466, "море", "sea"],
  [2, 1240, 748, "Охотское", "sea"], [2, 1240, 784, "море", "sea"], [2, 808, 1278, "Японское", "sea"], [2, 808, 1313, "море/Восточное", "sea"], [2, 808, 1349, "море", "sea"],
  [0, 1414, 358, "Сухона", "river", -22], [1, 127, 370, "Кама", "river", -15], [1, 450, 168, "Обь", "river", -65], [1, 510, 273, "Обь", "river", 55],
  [1, 912, 46, "Таз", "river", -70], [1, 1064, 120, "Енисей", "river", -80], [1, 1153, 394, "Енисей", "river", 62], [1, 1320, 470, "Ангара", "river"],
  [1, 624, 515, "Иртыш", "river", 22], [1, 786, 821, "Иртыш", "river", 58], [1, 906, 892, "Иртыш", "river", 25], [1, 1088, 724, "Томь", "river", 20],
  [1, 274, 709, "Урал", "river", -80], [1, 172, 820, "Урал", "river", 14], [1, 64, 928, "Урал", "river", 82], [1, 378, 757, "Тобол", "river", -42],
  [1, 1378, 952, "Идэр", "river"], [1, 935, 1273, "Тарим", "river", -8], [1, 803, 1341, "Яркенд", "river", -42], [1, 411, 1356, "Амударья", "river", 45],
  [1, 632, 1520, "Инд", "river", -50],
  [2, 541, 58, "Лена", "river", 65], [2, 634, 150, "Лена", "river", 38], [2, 745, 176, "Алдан", "river"], [2, 611, 315, "Лена", "river", -6], [2, 488, 347, "Лена", "river"],
  [2, 313, 358, "Лена", "river", 40], [2, 164, 447, "Лена", "river", -32], [2, 790, 392, "Алдан", "river", -48], [2, 1342, 159, "Колыма", "river", -50], [2, 115, 1283, "Хуанхэ", "river", 14],
  [1, 845, 260, "З а п а д н о -", "range"], [1, 845, 296, "С и б и р с к а я", "range"], [1, 845, 331, "р а в н и н а", "range"],
  [1, 285, 180, spread("Уральски"), "range", -80], [1, 955, 1202, spread("Тянь"), "range", -6], [1, 1155, 1170, spread("Шань"), "range", 4],
  [1, 1475, 1240, "Г о б и", "range"], [2, 1054, 896, "Сахалин", "range"], [2, 1049, 1175, "Хоккайдо", "range"],
  [0, 1285, 1177, "Эльбрус", "peak"], [1, 755, 1487, "Чогори", "peak"], [1, 1059, 1468, "Улугмузтаг", "peak"],
];

const dots: [Sheet, number, number][] = [
  [0, 1295, 96], [0, 1123, 273], [0, 861, 371], [0, 670, 420], [0, 934, 708], [0, 751, 790], [0, 540, 775], [0, 303, 783], [0, 163, 824],
  [0, 569, 890], [0, 231, 944], [0, 836, 901], [0, 1018, 873], [0, 1177, 893], [0, 1143, 962], [0, 1406, 952], [0, 623, 972], [0, 697, 1003],
  [0, 1022, 1047], [0, 1252, 1107], [0, 736, 1117], [0, 893, 1132], [0, 817, 1201], [0, 515, 1233], [0, 974, 1268], [0, 1415, 1243], [0, 1407, 1299],
  [0, 1081, 1309], [0, 62, 1291], [0, 829, 1382], [0, 251, 1427], [0, 449, 1425], [0, 1179, 1543], [0, 1402, 1548], [0, 1535, 613],
  [1, 40, 281], [1, 190, 494], [1, 312, 556], [1, 449, 541], [1, 334, 643], [1, 934, 651], [1, 1530, 788], [1, 554, 1255], [1, 540, 1361],
  [1, 251, 1384], [1, 13, 1291], [1, 55, 1466], [1, 552, 1507], [2, 684, 258], [2, 1270, 407], [2, 231, 798], [2, 67, 808], [2, 47, 985],
  [2, 623, 881], [2, 1045, 1027], [2, 743, 1186], [2, 312, 1309], [2, 334, 1340], [2, 606, 1397], [2, 964, 1466], [2, 844, 1502], [2, 1488, 751],
];

const peaks: [Sheet, number, number][] = [[0, 1350, 1178], [1, 757, 1460], [1, 1058, 1440]];

const pins: [Sheet, number, number, string, boolean?][] = [
  [0, 1011, 438, "Санкт-Петербург"], [0, 1308, 608, "Иваново"], [0, 1514, 580, "Чебоксары", true], [0, 1210, 682, "Москва", true],
  [0, 1271, 732, "Рязань"], [0, 735, 729, "Калининград"], [0, 1256, 876, "Воронеж"], [0, 1273, 1073, "Ростов-на-Дону"],
  [0, 1185, 1174, "Симферополь", true], [0, 1489, 1253, "Махачкала"], [1, 22, 803, "Самара"], [1, 183, 727, "Уфа"],
  [1, 666, 714, "Омск"], [1, 612, 904, "Астана"], [1, 764, 1242, "Алматы"], [1, 1212, 658, "Красноярск"], [2, 833, 1022, "Хабаровск"],
];

const MapText = styled.text<{ $kind: Kind }>`
  font-family: "Noto Sans", "Open Sans", sans-serif;
  font-size: ${(p) => ({ city: 11, country: 10, sea: 13, river: 11, range: 12, peak: 11 })[p.$kind]}px;
  font-style: ${(p) => (["sea", "river", "range"].includes(p.$kind) ? "italic" : "normal")};
  fill: ${(p) => ({ city: "#414141", country: "#8c9893", sea: "#3f7cc6", river: "#4480cc", range: "#a3807a", peak: "#5da018" })[p.$kind]};
  stroke: ${(p) => (p.$kind === "city" || p.$kind === "peak" ? "#fff" : "none")};
  stroke-opacity: 0.8;
  stroke-width: 2px;
  paint-order: stroke;
  text-anchor: middle;
  dominant-baseline: central;
`;

const Areas = ({ items }: { items: Area[] }) => (
  <>
    {items.map(([s, fill, d, rough], i) => (
      <g key={i} transform={`translate(${sheetX[s]} ${-13 * ky}) scale(${kx} ${ky})`}>
        <path d={d} fill={fill} />
        {rough && fill === forest && <path d={d} fill="#fff" opacity="0.75" filter="url(#clearings)" />}
        {rough && fill === snow && <path d={d} fill="#fff" filter="url(#slopes)" />}
        {rough && fill !== forest && fill !== snow && <path d={d} fill="#fff" opacity="0.8" filter="url(#relief)" />}
      </g>
    ))}
  </>
);

const DealerMap = () => (
  <MapFrame aria-label="Карта дилеров">
    <MapPicture viewBox="0 0 1905 600" preserveAspectRatio="xMidYMid slice" aria-hidden="true">
      <defs>
        <filter id="coast" filterUnits="userSpaceOnUse" x="-20" y="-20" width="1945" height="640">
          <feTurbulence type="fractalNoise" baseFrequency="0.06" numOctaves="4" seed="4" />
          <feDisplacementMap in="SourceGraphic" scale="14" xChannelSelector="R" yChannelSelector="G" />
        </filter>
        <filter id="clearings" x="0" y="0" width="1" height="1">
          <feTurbulence type="fractalNoise" baseFrequency="0.016 0.022" numOctaves="4" seed="9" />
          <feColorMatrix values="0 0 0 0 0.82  0 0 0 0 0.915  0 0 0 0 0.84  14 0 0 0 -8.2" />
          <feComposite in2="SourceAlpha" operator="in" />
        </filter>
        <filter id="relief" x="0" y="0" width="1" height="1" colorInterpolationFilters="sRGB">
          <feTurbulence type="fractalNoise" baseFrequency="0.07" numOctaves="4" seed="2" />
          <feColorMatrix values="0 0 0 0 0.85  0 0 0 0 0.92  0 0 0 0 0.86  9 0 0 0 -4.3" />
          <feComposite in2="SourceAlpha" operator="in" />
        </filter>
        <filter id="slopes" x="0" y="0" width="1" height="1" colorInterpolationFilters="sRGB">
          <feTurbulence type="fractalNoise" baseFrequency="0.03" numOctaves="5" seed="6" />
          <feColorMatrix values="0 0 0 0 0.8  0 0 0 0 0.89  0 0 0 0 0.84  12 0 0 0 -6" />
          <feComposite in2="SourceAlpha" operator="in" />
        </filter>
      </defs>
      <rect width="1905" height="600" fill={light} />
      <g filter="url(#coast)">
        <rect x="-20" y="-20" width="1945" height="640" fill={light} />
        <Areas items={vegetation} />
        <Areas items={dry} />
        <Areas items={ridges} />
        {rivers.map(([s, d], i) => (
          <g key={i} transform={`translate(${sheetX[s]} ${-13 * ky}) scale(${kx} ${ky})`}>
            <path d={d} fill="none" stroke={water} strokeWidth="3" strokeLinejoin="round" />
          </g>
        ))}
        <Areas items={seas} />
        <Areas items={depths} />
        <Areas items={islands} />
      </g>
      {peaks.map(([s, x, y]) => (
        <path key={x} transform={`translate(${px(s, x)} ${py(y)})`} d="M-5 4v-2l3-5 2 3 2-4 4 8Z" fill="#5da018" />
      ))}
      {dots.map(([s, x, y]) => (
        <circle key={`${s}-${x}-${y}`} cx={px(s, x)} cy={py(y)} r="2" fill="#fff" stroke="#555" />
      ))}
      {labels.map(([s, x, y, text, kind, turn], i) => (
        <MapText key={i} $kind={kind} transform={`translate(${px(s, x)} ${py(y)}) rotate(${turn ?? 0})`}>{text}</MapText>
      ))}
    </MapPicture>

    {pins.map(([s, x, y, city, small]) => (
      <PinButton key={city} type="button" aria-label={city} $x={px(s, x)} $y={py(y)} $small={!!small}>
        <PinShape small={!!small} />
      </PinButton>
    ))}

    <ZoomControl>
      <ZoomButton type="button" aria-label="Приблизить">
        <svg width="14" height="14" viewBox="0 0 14 14" stroke="currentColor" strokeWidth="4"><path d="M7 0v14M0 7h14" /></svg>
      </ZoomButton>
      <ZoomTrack>
        <ZoomHandle>
          <svg width="11" height="5" viewBox="0 0 11 5" stroke="#777" strokeDasharray="1 2"><path d="M0 .5h11M0 3.500h11" /></svg>
        </ZoomHandle>
      </ZoomTrack>
      <ZoomButton type="button" aria-label="Отдалить">
        <svg width="14" height="4" viewBox="0 0 14 4"><path d="M0 0h14v4H0Z" fill="currentColor" /></svg>
      </ZoomButton>
    </ZoomControl>

    <MapActions>
      <OpenMap href="#">
        <svg width="14" height="18" viewBox="0 0 14 18"><path d="M7 18 6.200 13.800Q0 12.500 0 7a7 7 0 0 1 14 0q0 5.500-6.200 6.800Z" fill="#f43" /><circle cx="7" cy="7" r="2.600" fill="#fff" /></svg>
        Открыть в Яндекс.Картах
      </OpenMap>
      <CreateMap href="#">Создать свою карту</CreateMap>
    </MapActions>
    <MapCopyright>
      <span>© Яндекс</span>
      <TermsLink href="#">Условия использования</TermsLink>
    </MapCopyright>
  </MapFrame>
);

/* ---------- content ---------- */

const categories = ["Мебельные ручки", "Дверные ручки", "Замки, ключи, аксессуары", "Крючки и вешалки для дома", "Опоры мебельные", "Петли мебельные", "Полкодержатели"];

const countries = [
  {
    name: "Россия",
    rows: 11,
    cities: ["Москва и Московская область", "Воронеж", "Иваново", "Калининград", "Киров", "Краснодар", "Красноярск", "Махачкала", "Омск", "Ростов-на-Дону", "Рязань", "Самара", "Санкт-Петербург", "Симферополь", "Уфа", "Хабаровск", "Чебоксары"],
  },
  { name: "Белоруссия", rows: 1, cities: ["Минск"] },
  { name: "Казахстан", rows: 2, cities: ["Алматы", "Астана"] },
];

const footerColumns = [
  ["О компании", "Новости", "Статьи", "Видео", "Оплата и доставка", "Контакты", "Стать партнёром", "Вопросы и ответы"],
  ["Акции", "Ручки мебельные", "Дверные ручки", "Крючки", "Полкодержатели", "Замки", "Петли", "Опоры"],
];

const Header = () => (
  <header>
    <Container>
      <TopNav>
        {["О компании", "Новости", "Видео", "Скачать каталог", "Стать партнёром"].map((t) => <a key={t} href="#">{t}</a>)}
      </TopNav>
      <ServiceRow>
        <IconLink href="#"><TruckIcon />Оплата и доставка</IconLink>
        <IconLink href="#"><PlaceIcon />Где купить</IconLink>
        <IconLink href="#"><CommentIcon />Обратная связь</IconLink>
        <IconLink href="#"><MailIcon />Контакты</IconLink>
        <Callback>
          <IconLink href="tel:+74951342911"><PhoneIcon />+7 495 134 29 11</IconLink>
          <CallbackButton type="button">Заказать звонок</CallbackButton>
        </Callback>
      </ServiceRow>
    </Container>
    <MainBar>
      <MainBarInner>
        <LogoLink href="#" aria-label="BRASS"><Logo /></LogoLink>
        <MainNav>
          <CatalogButton type="button"><MenuIcon />Каталог</CatalogButton>
          <MainLink href="#"><SparkIcon />Новинки</MainLink>
          <MainLink href="#"><PercentIcon />Скидки <CaretIcon /></MainLink>
        </MainNav>
        <Search role="search">
          <SearchInput type="search" aria-label="Поиск" />
          <button type="button" aria-label="Найти"><SearchIcon /></button>
        </Search>
        <UserTools>
          <Tool href="#" aria-label="Профиль"><UserIcon /></Tool>
          <Tool href="#" aria-label="Сравнение"><ScalesIcon /></Tool>
          <Tool href="#" aria-label="Избранное"><HeartIcon /></Tool>
          <BasketTool href="#" aria-label="Корзина"><BasketIcon /><Badge>3</Badge></BasketTool>
        </UserTools>
      </MainBarInner>
    </MainBar>
    <CategoryStrip>
      <CategoryInner>
        <ArrowButton type="button" aria-label="Назад"><Chevron w={9} h={16} left weight={1.8} /></ArrowButton>
        <CategoryNav>
          {categories.map((c) => <a key={c} href="#">{c}</a>)}
        </CategoryNav>
        <ArrowButton type="button" aria-label="Вперёд"><Chevron w={9} h={16} weight={1.8} /></ArrowButton>
      </CategoryInner>
    </CategoryStrip>
  </header>
);

const Footer = () => (
  <FooterRoot>
    <FooterBand>
      <FooterHead>
        <LogoLink href="#" aria-label="BRASS" $wide><Logo large /></LogoLink>
        <FooterTitle>BRASS — мебельная фурнитура</FooterTitle>
      </FooterHead>
    </FooterBand>
    <FooterBand>
      <FooterGrid>
        {footerColumns.map((items) => (
          <FooterLinks key={items[0]}>
            {items.map((t) => <li key={t}><a href="#">{t}</a></li>)}
          </FooterLinks>
        ))}
        <Contacts>
          <ContactRow>
            <PhoneIcon size={18} weight={1.4} />
            <Phones>
              <a href="tel:+74951342911">+7 495 134 29 11</a>
              <a href="tel:+74959802911">+7 495 980 29 11</a>
              <a href="tel:+74959957564">+7 495 995 75 64</a>
            </Phones>
          </ContactRow>
          <ContactRow>
            <WhatsAppIcon />
            <ChatBlock>Пишите нам в WhatsApp<ChatLink href="#">+7 495 134 29 11</ChatLink></ChatBlock>
          </ContactRow>
          <ContactRow>
            <WhatsAppIcon />
            <ChatBlock>Пишите нам в Telegram<ChatLink href="#">t.me/brasschat</ChatLink></ChatBlock>
          </ContactRow>
          <ContactRow>
            <PlaceIcon size={20} weight={1.3} />
            <p>143400, Россия,<br />Московская область,<br />д. Гольево, ул. Центральная, д. 3</p>
          </ContactRow>
          <ContactRow>
            <ClockIcon />
            <p>Пн — Чт 09:00 — 18:00<br />Пт 09:00 — 17:00<br />Сб—Вс Выходные</p>
          </ContactRow>
        </Contacts>
        <Social>
          <SocialTitle>Мы в соцсетях</SocialTitle>
          <SocialLink href="#"><TelegramIcon />Канал Telegram</SocialLink>
          <SocialLink href="#"><YoutubeIcon />Youtube</SocialLink>
        </Social>
      </FooterGrid>
    </FooterBand>
    <Copyright>
      2000 — 2023, ООО «Торговый дом “БРАСС”». Все права защищены. <a href="#">Пользовательское соглашение</a>, <a href="#">Политика конфиденциальности</a>
    </Copyright>
  </FooterRoot>
);

const App = () => (
  <>
    <GlobalStyle />
    <Header />
    <main>
      <CrumbBar>
        <Crumbs as="nav" aria-label="Навигация">
          <a href="#">Главная страница</a>
          <Chevron w={5} h={9} weight={2} />
          <a href="#">О магазине</a>
          <Chevron w={5} h={9} weight={2} />
          <CurrentCrumb>Где купить</CurrentCrumb>
        </Crumbs>
      </CrumbBar>
      <Container>
        <PageTitle>Мебельная фурнитура BRASS в регионах, дилеры</PageTitle>
      </Container>
      <DealerMap />
      <Dealers>
        {countries.map((c) => (
          <Country key={c.name}>
            <CountryName>{c.name}</CountryName>
            <CityList $rows={c.rows}>
              {c.cities.map((city) => <li key={city}><a href="#">{city}</a></li>)}
            </CityList>
          </Country>
        ))}
      </Dealers>
    </main>
    <Footer />
  </>
);

export default App;
